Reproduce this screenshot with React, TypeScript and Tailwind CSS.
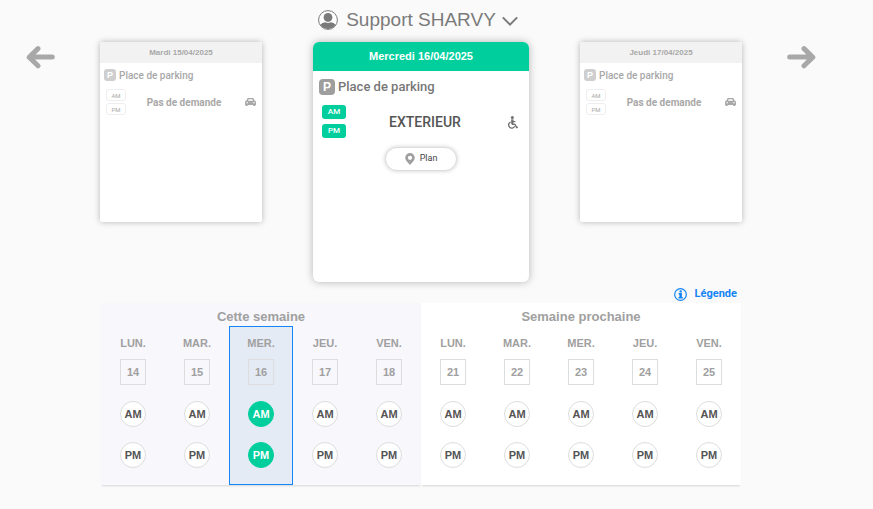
import React, { useState } from "react";
import clsx from "clsx";

interface DayType {
  label: string;
  date: number;
}

interface WeekType {
  title: string;
  current: boolean;
  days: DayType[];
}

const WEEKS: WeekType[] = [
  {
    title: "Cette semaine",
    current: true,
    days: [
      { label: "LUN.", date: 14 },
      { label: "MAR.", date: 15 },
      { label: "MER.", date: 16 },
      { label: "JEU.", date: 17 },
      { label: "VEN.", date: 18 },
    ],
  },
  {
    title: "Semaine prochaine",
    current: false,
    days: [
      { label: "LUN.", date: 21 },
      { label: "MAR.", date: 22 },
      { label: "MER.", date: 23 },
      { label: "JEU.", date: 24 },
      { label: "VEN.", date: 25 },
    ],
  },
];

const PERIODS = ["AM", "PM"];

// #region : Icons
const UserIcon = () => (
  <svg className="size-5" viewBox="0 0 20 20" aria-hidden="true">
    <circle cx="10" cy="10" r="9.4" fill="#fff" stroke="#7a7a7a" />
    <ellipse cx="10" cy="7.4" rx="4.4" ry="4.5" fill="#7a7a7a" />
    <path
      d="M2.4 14.6c1.3-1.3 3-1.9 4.9-2.3.8.5 1.7.8 2.7.8s1.9-.3 2.7-.8c1.9.4 3.6 1 4.9 2.3A8.9 8.9 0 0 1 10 18.9a8.9 8.9 0 0 1-7.6-4.3z"
      fill="#7a7a7a"
    />
  </svg>
);

const ChevronIcon = () => (
  <svg className="h-5 w-4" viewBox="0 0 16 20" fill="none" aria-hidden="true">
    <path d="M.8 7.4 8 14.7l7.2-7.3" stroke="#7a7a7a" strokeWidth="2" />
  </svg>
);

const ArrowIcon = ({ className }: { className?: string }) => (
  <svg
    className={clsx("h-6 w-[29px]", className)}
    viewBox="0 0 29 24"
    fill="none"
    stroke="#a8a8a8"
    strokeWidth="5"
    strokeLinecap="round"
    strokeLinejoin="round"
    aria-hidden="true"
  >
    <path d="M26.3 12H4M12 3.6 3.2 12.2l8.8 8.6" />
  </svg>
);

const InfoIcon = () => (
  <svg className="size-[13px]" viewBox="0 0 13 13" aria-hidden="true">
    <circle
      cx="6.5"
      cy="6.5"
      r="5.8"
      fill="none"
      stroke="#1485f5"
      strokeWidth="1.2"
    />
    <circle cx="6.7" cy="3.4" r="1.2" fill="#1485f5" />
    <path d="M4.6 5.1h3.3v4h.9v1.3H4.5V9.1h.9V6.4h-.8z" fill="#1485f5" />
  </svg>
);

const PinIcon = () => (
  <svg className="h-3 w-[10px]" viewBox="0 0 10 12" aria-hidden="true">
    <path
      d="M5 0A4.8 4.8 0 0 0 .2 4.8C.2 7.6 3 9.500 5 12c2-2.5 4.800-4.4 4.800-7.2A4.8 4.8 0 0 0 5 0zm0 2.700a2.1 2.1 0 1 1 0 4.2 2.1 2.1 0 0 1 0-4.2z"
      fill="#a0a0a0"
      fillRule="evenodd"
    />
  </svg>
);

const WheelchairIcon = () => (
  <svg
    className="mt-[2px] h-[13px] w-[11px]"
    viewBox="0 0 33 39"
    fill="none"
    stroke="#707070"
    strokeWidth="4"
    aria-hidden="true"
  >
    <circle cx="16" cy="4.5" r="4.5" fill="#707070" stroke="none" />
    <path d="M16 10v15" strokeWidth="7" />
    <path d="M16 17h9M15 25h9l5 10 4-2" />
    <path d="M11 18a9.5 9.5 0 1 0 12 13" />
  </svg>
);

const CarIcon = () => (
  <svg
    className="h-2 w-[11px]"
    viewBox="0 0 33 24"
    fill="#a8a8a8"
    aria-hidden="true"
  >
    <path
      d="M8 0h17l4 8h3v3l1 2v8H0v-8l1-2V8h3zM11 4 9 8h15l-2-4zM4 13v3h5v-3zM24 13v3h5v-3z"
      fillRule="evenodd"
    />
    <path d="M2 20h6v4H2zM25 20h6v4h-6z" />
  </svg>
);
// #endregion

const SideCard = ({ title }: { title: string }) => (
  <article className="h-[180px] w-[162px] rounded-xs bg-white text-[#a8a8a8] shadow-[0_0_6px_rgba(0,0,0,0.28)]">
    <h2 className="rounded-t-xs bg-[#f2f2f2] text-center text-[8px] leading-[21px] font-bold">
      {title}
    </h2>
    <div className="flex h-6 items-center gap-[3px] px-1">
      <span className="flex size-3 items-center justify-center rounded-[3px] bg-[#cfcfcf] text-[9px] leading-3 font-bold text-white">
        P
      </span>
      <span className="font-[Roboto,sans-serif] text-[10px] font-medium">
        Place de parking
      </span>
    </div>
    <div className="mt-[2px] flex items-center px-[6px]">
      <div className="flex flex-col gap-[2px]">
        {PERIODS.map((period) => (
          <span
            key={period}
            className="flex h-3 w-5 items-center justify-center rounded-[3px] border border-[#eeeeee] font-[Roboto,sans-serif] text-[6px]"
          >
            {period}
          </span>
        ))}
      </div>
      <p className="flex-1 pr-[3px] text-center font-[Roboto,sans-serif] text-[10px] font-bold">
        Pas de demande
      </p>
      <CarIcon />
    </div>
  </article>
);

const MainCard = () => (
  <article className="h-60 w-[216px] rounded-md bg-white shadow-[0_0_9px_rgba(0,0,0,0.28)]">
    <h2 className="rounded-t-md bg-[#00cf9d] text-center text-[11px] leading-[29px] font-bold text-white">
      Mercredi 16/04/2025
    </h2>
    <div className="flex h-8 items-center gap-[3px] px-[6px]">
      <span className="flex size-4 items-center justify-center rounded-sm bg-[#9e9e9e] text-xs font-bold text-white">
        P
      </span>
      <span className="font-[Roboto,sans-serif] text-[13px] leading-4 font-medium text-[#777]">
        Place de parking
      </span>
    </div>
    <div className="mt-[2px] flex items-center pr-[11px] pl-[9px]">
      <div className="flex flex-col gap-[5px]">
        {PERIODS.map((period) => (
          <span
            key={period}
            className="flex h-[14px] w-6 items-center justify-center rounded-[3px] bg-[#00cf9d] font-[Roboto,sans-serif] text-[8px] font-medium text-white"
          >
            {period}
          </span>
        ))}
      </div>
      <p className="flex-1 pr-[3px] text-center font-[Roboto,sans-serif] text-sm font-medium text-[#555]">
        EXTERIEUR
      </p>
      <WheelchairIcon />
    </div>
    <button
      type="button"
      className="mx-auto mt-[9px] flex h-6 w-[72px] items-center justify-center gap-[5px] rounded-full border border-[#dddddd] bg-white font-[Roboto,sans-serif] text-[9px] text-[#444] shadow-[0_0_4px_rgba(0,0,0,0.2)]"
    >
      <PinIcon />
      Plan
    </button>
  </article>
);

interface DayColumnProps {
  day: DayType;
  selected: boolean;
  onSelect: () => void;
}

const DayColumn = ({ day, selected, onSelect }: DayColumnProps) => (
  <div
    className={clsx(
      "flex flex-1 flex-col items-center border pt-2 pb-4 text-[11px] font-bold",
      selected ? "border-[#1485f5] bg-[#e4ebf5]" : "border-transparent"
    )}
  >
    <span className="leading-4 text-[#a0a0a0]">{day.label}</span>
    <button
      type="button"
      onClick={onSelect}
      className="mt-2 size-[26px] border border-[#dddddd] text-[#a0a0a0]"
    >
      {day.date}
    </button>
    <div className="mt-4 flex flex-col gap-[15px]">
      {PERIODS.map((period) => (
        <button
          key={period}
          type="button"
          className={clsx(
            "size-[26px] rounded-full border",
            selected
              ? "border-[#00cf9d] bg-[#00cf9d] text-white"
              : "border-[#dddddd] bg-white text-[#555]"
          )}
        >
          {period}
        </button>
      ))}
    </div>
  </div>
);

export default function App() {
  const [selectedDate, setSelectedDate] = useState<number>(16);

  return (
    <div className="min-h-screen bg-[#fafafa] pr-[31px] font-['Liberation_Sans',Arial,sans-serif]">
      <header className="flex justify-center pt-[5px]">
        <button
          type="button"
          className="mr-[6px] flex items-center text-[19px] leading-[30px] text-[#7a7a7a]"
        >
          <UserIcon />
          <span className="mr-[6px] ml-2">Support SHARVY</span>
          <ChevronIcon />
        </button>
      </header>

      {/* Cards */}
      <main className="mx-auto max-w-[790px]">
        <div className="mt-[7px] flex items-start justify-between">
          <button
            type="button"
            className="mt-[3px]"
            aria-label="Jour précédent"
          >
            <ArrowIcon />
          </button>
          <div className="flex items-start gap-[51px]">
            <SideCard title="Mardi 15/04/2025" />
            <MainCard />
            <SideCard title="Jeudi 17/04/2025" />
          </div>
          <button type="button" className="mt-[3px]" aria-label="Jour suivant">
            <ArrowIcon className="-scale-x-100" />
          </button>
        </div>

        {/* Calendar */}
        <section className="mx-auto max-w-[640px]">
          <div className="flex justify-end pt-[3px] pr-1">
            <button
              type="button"
              className="flex items-center gap-2 font-[Roboto,sans-serif] text-[11px] leading-[18px] font-bold text-[#1485f5]"
            >
              <InfoIcon />
              Légende
            </button>
          </div>
          <div className="flex">
            {WEEKS.map((week) => (
              <div
                key={week.title}
                className={clsx(
                  "flex-1 shadow-[0_2px_2px_-1px_rgba(0,0,0,0.15)]",
                  week.current ? "bg-[#f7f7fc]" : "bg-white"
                )}
              >
                <h3 className="pt-1 text-center text-[13px] leading-[19px] font-bold text-[#a0a0a0]">
                  {week.title}
                </h3>
                <div className="flex">
                  {week.days.map((day) => (
                    <DayColumn
                      key={day.date}
                      day={day}
                      selected={day.date === selectedDate}
                      onSelect={() => setSelectedDate(day.date)}
                    />
                  ))}
                </div>
              </div>
            ))}
          </div>
        </section>
      </main>
    </div>
  );
}
